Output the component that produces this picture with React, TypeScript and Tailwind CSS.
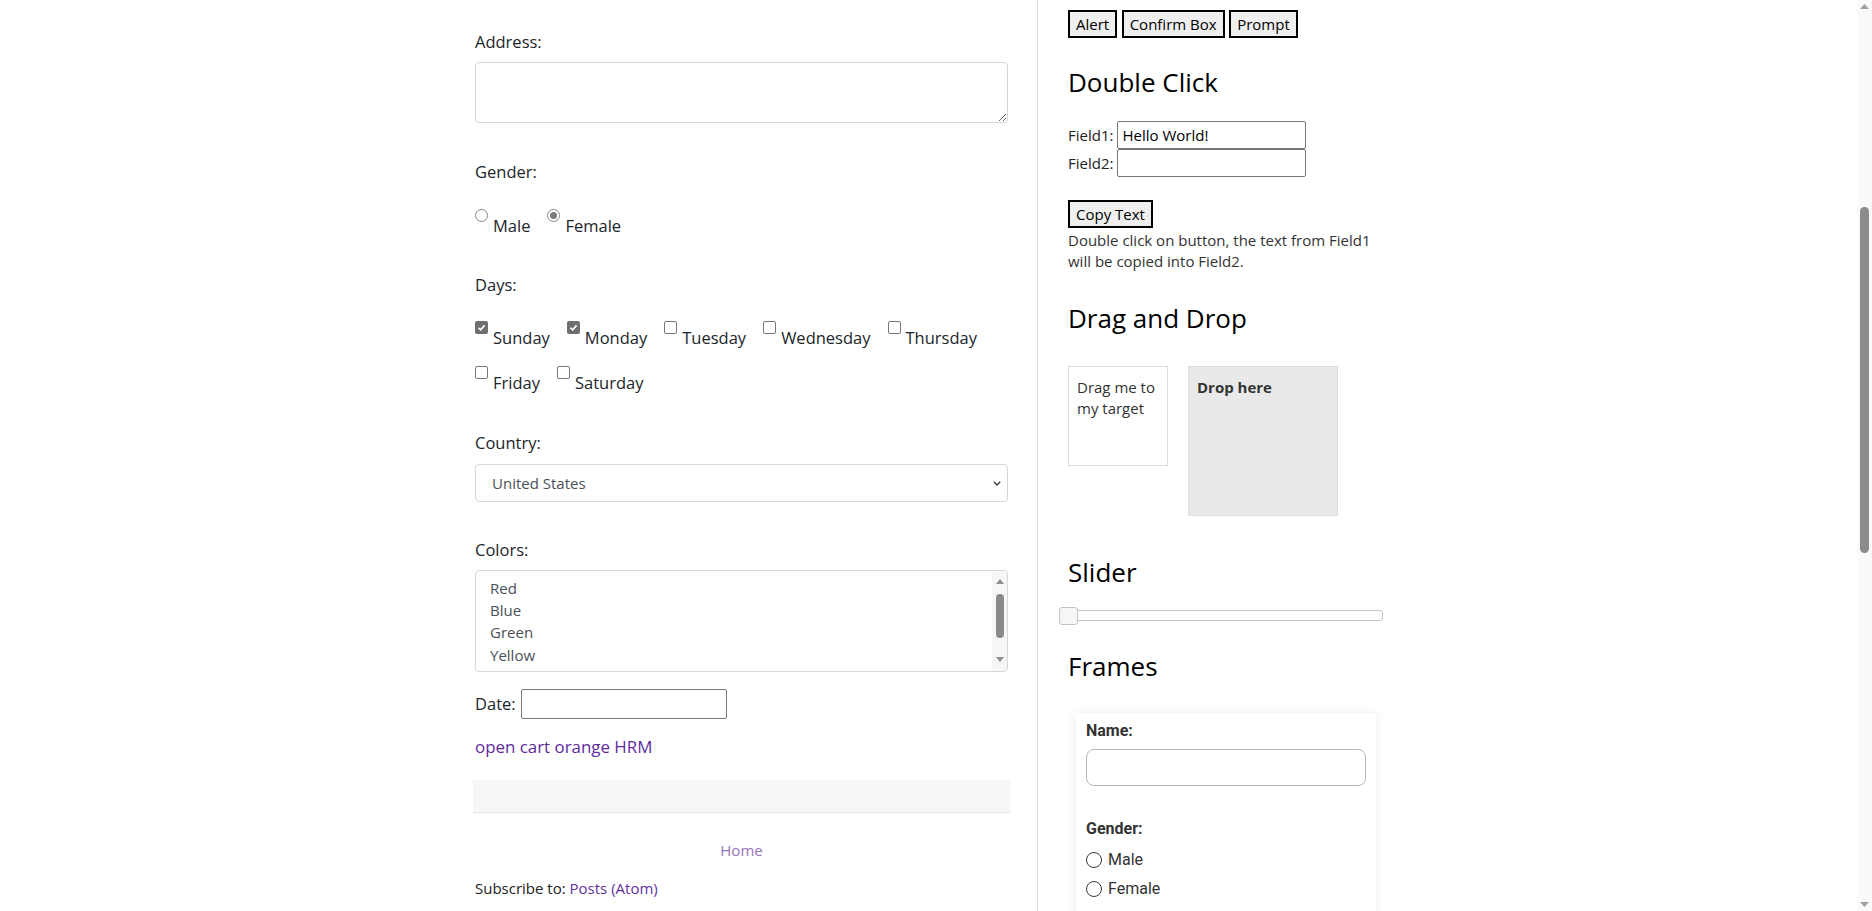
import React from 'react';

const daysRow1 = [
  { label: 'Sunday', checked: true },
  { label: 'Monday', checked: true },
  { label: 'Tuesday', checked: false },
  { label: 'Wednesday', checked: false },
  { label: 'Thursday', checked: false },
];

const daysRow2 = [
  { label: 'Friday', checked: false },
  { label: 'Saturday', checked: false },
];

// only the rows the list box shows without scrolling
const colors = ['Red', 'Blue', 'Green', 'Yellow'];

function CheckBox({ checked }: { checked?: boolean }) {
  if (checked) {
    return (
      <span className="flex h-[13px] w-[13px] shrink-0 items-center justify-center rounded-[2px] bg-[#6f6f6f]">
        <svg viewBox="0 0 10 10" className="h-[9px] w-[9px]">
          <path d="M1.6 5.3 L4 7.6 L8.4 2.6" fill="none" stroke="#fff" strokeWidth="1.8" />
        </svg>
      </span>
    );
  }
  return <span className="h-[13px] w-[13px] shrink-0 rounded-[2px] border border-[#767676] bg-white" />;
}

function Radio({ checked }: { checked?: boolean }) {
  return (
    <span className="flex h-[13px] w-[13px] shrink-0 items-center justify-center rounded-full border border-[#858585] bg-white">
      {checked && <span className="h-[7px] w-[7px] rounded-full bg-[#7a7a7a]" />}
    </span>
  );
}

function Option({ label, children }: { label: string; children: React.ReactNode }) {
  return (
    <label className="flex items-start gap-[5px]">
      {children}
      <span className="mt-[5px]">{label}</span>
    </label>
  );
}

function PageButton({ children }: { children: React.ReactNode }) {
  return (
    <button className="h-[28px] border-2 border-black bg-[#efefef] px-[6px] text-[15px] leading-[22px] text-black">
      {children}
    </button>
  );
}

function Heading({ children, className }: { children: React.ReactNode; className: string }) {
  return <h2 className={'text-[26px] leading-[32px] text-black ' + className}>{children}</h2>;
}

function LeftColumn() {
  return (
    <div className="w-[537px] shrink-0 pt-[30px] text-[16.5px] leading-[24px] text-[#212529]">
      <div className="mx-[2px]">
        <p>Address:</p>
        <textarea className="mt-[8px] block h-[61px] w-full rounded-[4px] border border-[#d3d8dd] bg-white" />

        <p className="mt-[37px]">Gender:</p>
        <div className="mt-[25px] flex gap-[17px]">
          <Option label="Male">
            <Radio />
          </Option>
          <Option label="Female">
            <Radio checked />
          </Option>
        </div>

        <p className="mt-[35px]">Days:</p>
        <div className="mt-[24px] flex gap-[17px]">
          {daysRow1.map((d) => (
            <Option key={d.label} label={d.label}>
              <CheckBox checked={d.checked} />
            </Option>
          ))}
        </div>
        <div className="mt-[16px] flex gap-[17px]">
          {daysRow2.map((d) => (
            <Option key={d.label} label={d.label}>
              <CheckBox checked={d.checked} />
            </Option>
          ))}
        </div>

        <p className="mt-[36px]">Country:</p>
        <div className="mt-[9px] flex h-[38px] items-center justify-between rounded-[4px] border border-[#d3d8dd] bg-white pl-[16px] pr-[6px] text-[15px] text-[#495057]">
          <span>United States</span>
          <svg width="8" height="5" viewBox="0 0 8 5">
            <path d="M0.8 0.8 L4 4 L7.2 0.8" fill="none" stroke="#333" strokeWidth="1.3" />
          </svg>
        </div>

        <p className="mt-[36px]">Colors:</p>
        <div className="mt-[8px] flex h-[102px] overflow-hidden rounded-[4px] border border-[#d3d8dd] bg-white">
          <div className="flex-1 pl-[14px] pt-[6px] text-[15px] leading-[22.2px] text-[#495057]">
            {colors.map((c, i) => (
              <div key={i}>{c}</div>
            ))}
          </div>
          <div className="flex w-[15px] flex-col items-center bg-[#f7f7f7] pb-[9px] pt-[8px]">
            <svg width="8" height="5" viewBox="0 0 8 5">
              <path d="M0 5 L4 0 L8 5Z" fill="#8f8f8f" />
            </svg>
            <div className="mt-[10px] h-[44px] w-[8px] rounded-full bg-[#8a8a8a]" />
            <div className="flex-1" />
            <svg width="8" height="5" viewBox="0 0 8 5">
              <path d="M0 0 L8 0 L4 5Z" fill="#8f8f8f" />
            </svg>
          </div>
        </div>

        <div className="mt-[17px] flex items-center gap-[5px]">
          <span>Date:</span>
          <input className="h-[30px] w-[206px] rounded-[2px] border border-[#767676] bg-white" />
        </div>

        <a className="mt-[16px] block text-[16.9px] text-[#5e2a9c]">open cart orange HRM</a>
      </div>

      <div className="mt-[21px] h-[33px] border-b border-[#e6e6e6] bg-[#f7f7f7]" />

      <div className="mx-[2px] text-[15px] leading-[22px] text-[#222]">
        <p className="mt-[26px] text-center text-[#9575bb]">Home</p>
        <p className="mt-[16px]">
          Subscribe to: <a className="text-[#6232a0]">Posts (Atom)</a>
        </p>
      </div>
    </div>
  );
}

function RightColumn() {
  return (
    <div className="w-[345px] shrink-0 pl-[30px] pt-[10px] text-[15px] leading-[21px] text-[#222]">
      <div className="flex gap-[4.5px]">
        <PageButton>Alert</PageButton>
        <PageButton>Confirm Box</PageButton>
        <PageButton>Prompt</PageButton>
      </div>

      <Heading className="mt-[28px]">Double Click</Heading>
      <div className="mt-[23px] flex items-center gap-[4px]">
        <span>Field1:</span>
        <input
          readOnly
          value="Hello World!"
          className="h-[28px] w-[189px] rounded-[2px] border border-[#767676] px-[4px] text-black"
        />
      </div>
      <div className="flex items-center gap-[4px]">
        <span>Field2:</span>
        <input readOnly className="h-[28px] w-[189px] rounded-[2px] border border-[#767676] px-[4px]" />
      </div>
      <div className="mt-[23px]">
        <PageButton>Copy Text</PageButton>
      </div>
      <p className="pt-[2px] text-[#333]">Double click on button, the text from Field1 will be copied into Field2.</p>

      <Heading className="mt-[30px]">Drag and Drop</Heading>
      <div className="mt-[32px] flex items-start gap-[20px] text-[#333]">
        <div className="h-[100px] w-[100px] border border-[#dddddd] bg-white pl-[8px] pr-[8px] pt-[10px]">
          Drag me to my target
        </div>
        <div className="h-[150px] w-[150px] border border-[#dddddd] bg-[#e9e9e9] pl-[8px] pt-[10px] font-bold">
          Drop here
        </div>
      </div>

      <Heading className="mt-[40px]">Slider</Heading>
      <div className="relative mt-[22px] h-[11px] w-[315px] rounded-[3px] border border-[#c5c5c5] bg-white">
        <span className="absolute left-[-10px] top-[-4px] h-[18px] w-[19px] rounded-[3px] border border-[#c5c5c5] bg-[#f6f6f6]" />
      </div>

      <Heading className="mt-[29px]">Frames</Heading>
      <div className="ml-[8px] mt-[31px] w-[300px] bg-white px-[10px] pb-[40px] pt-[8px] font-['Roboto',sans-serif] text-[16px] leading-[19px] text-[#333] shadow-[0_0_10px_rgba(0,0,0,0.08)]">
        <p className="font-bold">Name:</p>
        <input className="mt-[9px] h-[37px] w-full rounded-[8px] border border-[#b8b8b8] bg-white" />
        <p className="mt-[33px] font-bold">Gender:</p>
        <div className="mt-[12px] flex items-center gap-[6px]">
          <span className="h-[16px] w-[16px] rounded-full border-[1.5px] border-[#3a3a3a]" />
          <span>Male</span>
        </div>
        <div className="mt-[10px] flex items-center gap-[6px]">
          <span className="h-[16px] w-[16px] rounded-full border-[1.5px] border-[#3a3a3a]" />
          <span>Female</span>
        </div>
      </div>
    </div>
  );
}

function PageScrollbar() {
  return (
    <div className="flex w-[15px] shrink-0 flex-col items-center bg-[#fafafa] pb-[4px] pt-[4px]">
      <svg width="9" height="5" viewBox="0 0 9 5">
        <path d="M0 5 L4.5 0 L9 5Z" fill="#a0a0a0" />
      </svg>
      <div className="mt-[198px] h-[346px] w-[9px] rounded-full bg-[#8b8b8b]" />
      <div className="flex-1" />
      <svg width="9" height="5" viewBox="0 0 9 5">
        <path d="M0 0 L9 0 L4.5 5Z" fill="#a0a0a0" />
      </svg>
    </div>
  );
}

export default function App() {
  return (
    <div className="flex h-[911px] w-full overflow-hidden bg-white font-['Open_Sans',sans-serif]">
      <div className="min-w-0 flex-1 overflow-hidden">
        <div className="flex h-full pl-[473px]">
          <LeftColumn />
          <div className="ml-[27px] w-px shrink-0 bg-[#dcdcdc]" />
          <RightColumn />
        </div>
      </div>
      <PageScrollbar />
    </div>
  );
}
